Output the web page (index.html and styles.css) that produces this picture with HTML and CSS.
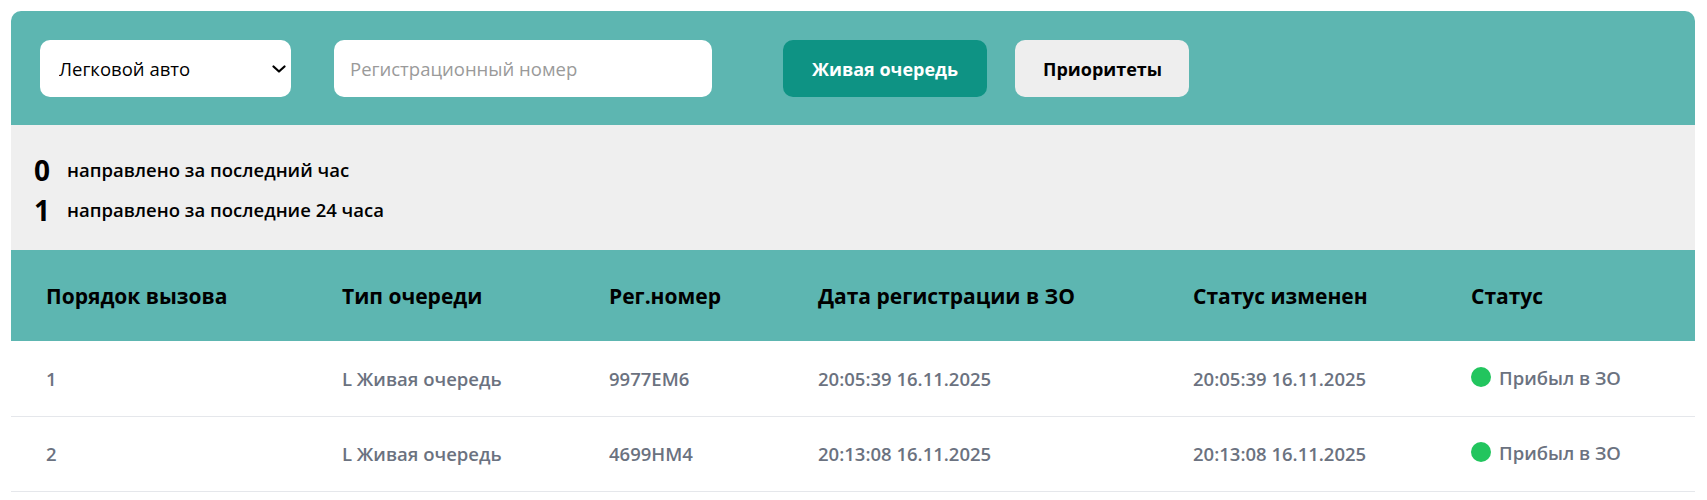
FILE: index.html
```html
<!DOCTYPE html>
<html lang="ru">
<head>
<meta charset="utf-8">
<title>Очередь</title>
<link rel="stylesheet" href="styles.css">
</head>
<body>
<div class="page">
  <div class="panel">
    <div class="toolbar">
      <div class="select-wrap">
        <select class="select">
          <option>Легковой авто</option>
        </select>
        <svg class="chevron" viewBox="0 0 14 8" width="14" height="8"><path d="M1.5 1.5 L7 6.5 L12.5 1.5" fill="none" stroke="#000" stroke-width="2.2" stroke-linecap="round" stroke-linejoin="round"/></svg>
      </div>
      <input class="input" type="text" placeholder="Регистрационный номер">
      <button class="btn btn-primary">Живая очередь</button>
      <button class="btn btn-secondary">Приоритеты</button>
    </div>
    <div class="stats">
      <div class="stat"><span class="stat-num">0</span><span class="stat-label">направлено за последний час</span></div>
      <div class="stat"><span class="stat-num">1</span><span class="stat-label">направлено за последние 24 часа</span></div>
    </div>
    <table class="queue">
      <colgroup>
        <col class="c1"><col class="c2"><col class="c3"><col class="c4"><col class="c5"><col class="c6">
      </colgroup>
      <thead>
        <tr>
          <th>Порядок вызова</th>
          <th>Тип очереди</th>
          <th>Рег.номер</th>
          <th>Дата регистрации в ЗО</th>
          <th>Статус изменен</th>
          <th>Статус</th>
        </tr>
      </thead>
      <tbody>
        <tr>
          <td>1</td>
          <td>L Живая очередь</td>
          <td>9977EM6</td>
          <td>20:05:39 16.11.2025</td>
          <td>20:05:39 16.11.2025</td>
          <td><span class="status"><span class="dot"></span>Прибыл в ЗО</span></td>
        </tr>
        <tr>
          <td>2</td>
          <td>L Живая очередь</td>
          <td>4699HM4</td>
          <td>20:13:08 16.11.2025</td>
          <td>20:13:08 16.11.2025</td>
          <td><span class="status"><span class="dot"></span>Прибыл в ЗО</span></td>
        </tr>
      </tbody>
    </table>
  </div>
</div>
</body>
</html>
```

FILE: styles.css
```css
* { box-sizing: border-box; }

html, body {
  margin: 0;
  background: #ffffff;
  font-family: "Open Sans", "Noto Sans", "DejaVu Sans", sans-serif;
  color: #000;
}

.page {
  padding: 11px 12px 0 11px;
}

.panel {
  border-radius: 10px 10px 0 0;
  overflow: hidden;
}

.toolbar {
  background: #5db6b1;
  padding: 29px 29px 28px 29px;
  display: flex;
  align-items: center;
}

.select-wrap {
  position: relative;
  width: 251px;
  height: 57px;
  margin-right: 43px;
}

.select {
  appearance: none;
  -webkit-appearance: none;
  width: 100%;
  height: 100%;
  border: none;
  border-radius: 10px;
  background: #fff;
  padding: 0 40px 0 19px;
  font-family: inherit;
  font-size: 18.5px;
  color: #000;
  outline: none;
}

.chevron {
  position: absolute;
  top: 25px;
  right: 5px;
  width: 14px;
  height: 8px;
  pointer-events: none;
}

.input {
  width: 378px;
  height: 57px;
  border: none;
  border-radius: 10px;
  background: #fff;
  padding: 0 16px;
  font-family: inherit;
  font-size: 18.5px;
  color: #000;
  outline: none;
  margin-right: 71px;
}

.input::placeholder {
  color: #9a9a9a;
}

.btn {
  height: 57px;
  border: none;
  border-radius: 10px;
  font-family: inherit;
  font-size: 18px;
  font-weight: 700;
  padding: 0 28px;
  cursor: pointer;
}

.btn-primary {
  width: 204px;
  background: #0e9384;
  color: #fff;
  margin-right: 28px;
}

.btn-secondary {
  width: 174px;
  background: #eeeeee;
  color: #000;
}

.stats {
  background: #efefef;
  height: 125px;
  padding: 25px 23px 0 23px;
  display: flex;
  flex-direction: column;
  gap: 1px;
}

.stat {
  display: flex;
  align-items: center;
  height: 39px;
}

.stat-num {
  font-size: 28px;
  font-weight: 700;
  width: 33px;
  text-align: left;
}

.stat-label {
  font-size: 18.5px;
  font-weight: 600;
}

.queue {
  width: 100%;
  border-collapse: collapse;
  table-layout: fixed;
}

.c1 { width: 296px; }
.c2 { width: 267px; }
.c3 { width: 209px; }
.c4 { width: 375px; }
.c5 { width: 278px; }
.c6 { width: auto; }

.queue thead tr {
  background: #5db6b1;
  height: 91px;
}

.queue th {
  text-align: left;
  font-size: 21px;
  font-weight: 700;
  padding: 0 0 0 35px;
  color: #000;
}

.queue tbody tr {
  height: 75px;
  border-bottom: 1px solid #e5e7eb;
}

.queue td {
  padding: 0 0 0 35px;
  font-size: 18.5px;
  font-weight: 600;
  color: #6b7280;
}

.status {
  display: inline-flex;
  align-items: center;
  gap: 8px;
}

.dot {
  width: 20px;
  height: 20px;
  border-radius: 50%;
  background: #22c55e;
}
```
